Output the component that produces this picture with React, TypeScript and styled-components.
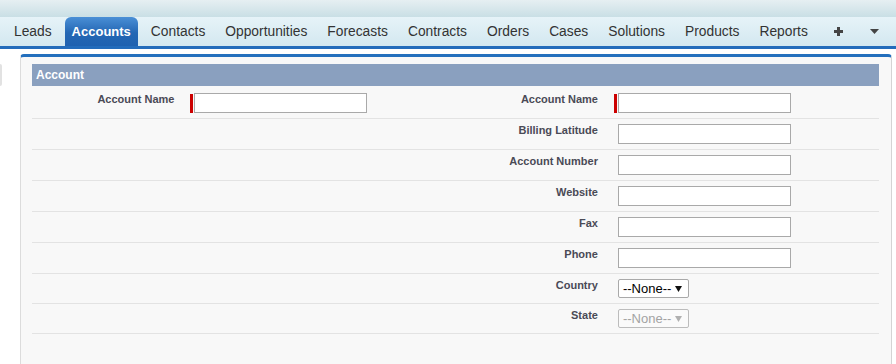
import React from 'react';
import styled, { createGlobalStyle } from 'styled-components';

const tabs = ['Leads', 'Accounts', 'Contacts', 'Opportunities', 'Forecasts', 'Contracts', 'Orders', 'Cases', 'Solutions', 'Products', 'Reports'];

type Field = { label: string; kind?: 'input' | 'select'; required?: boolean; disabled?: boolean };

const rows: { left?: Field; right?: Field }[] = [
  { left: { label: 'Account Name', required: true }, right: { label: 'Account Name', required: true } },
  { right: { label: 'Billing Latitude' } },
  { right: { label: 'Account Number' } },
  { right: { label: 'Website' } },
  { right: { label: 'Fax' } },
  { right: { label: 'Phone' } },
  { right: { label: 'Country', kind: 'select' } },
  { right: { label: 'State', kind: 'select', disabled: true } },
];

const GlobalStyle = createGlobalStyle`
  html, body {
    margin: 0;
    padding: 0;
    background: #fff;
    overflow: hidden;
  }
  body {
    font-family: "Liberation Sans", Arial, sans-serif;
  }
  * { box-sizing: border-box; }
`;

const TopBand = styled.div`
  height: 17px;
  background: linear-gradient(#e6eff2, #c9dfe5);
`;

const TabBar = styled.nav`
  height: 32px;
  display: flex;
  align-items: flex-end;
  gap: 6px;
  padding-left: 7px;
  background: linear-gradient(#e6f3f8, #d3e8f0);
  border-bottom: 3px solid #236cbb;
`;

const Tab = styled.div<{ $active?: boolean }>`
  height: 29px;
  line-height: 29px;
  padding: 0 7px;
  font-size: ${(p) => (p.$active ? '13px' : '13.8px')};
  font-weight: ${(p) => (p.$active ? 'bold' : 'normal')};
  color: ${(p) => (p.$active ? '#fff' : '#333')};
  background: ${(p) => (p.$active ? 'linear-gradient(#4a8fd6, #2467b4 55%, #1f62b0)' : 'transparent')};
  border-radius: 6px 6px 0 0;
  white-space: nowrap;
`;

const IconTab = styled.div<{ $ml: number }>`
  height: 29px;
  display: flex;
  align-items: center;
  margin-left: ${(p) => p.$ml}px;
  color: #444;
`;

const Body = styled.div`
  display: flex;
  align-items: flex-start;
  padding-top: 5px;
`;

const Handle = styled.div`
  width: 2px;
  height: 22px;
  margin-top: 10px;
  background: #e2e2e2;
  border-radius: 0 3px 3px 0;
`;

const Panel = styled.section`
  flex: 1;
  margin: 0 4px 0 18px;
  padding: 7px 12px 30px 11px;
  background: #f8f8f8;
  border-top: 3px solid #236fbd;
  border-left: 1px solid #dcdcdc;
  border-right: 1px solid #d4d4d4;
  border-radius: 4px 4px 0 0;
`;

const SectionHeader = styled.h3`
  margin: 0;
  height: 22px;
  line-height: 22px;
  padding-left: 4px;
  background: #8aa0bf;
  color: #fff;
  font-size: 12px;
  font-weight: bold;
`;

const Rows = styled.div``;

const Row = styled.div`
  display: grid;
  grid-template-columns: 18% 32% 18% 32%;
  border-bottom: 1px solid #e3e3e3;
  &:first-child {
    padding-top: 2px;
  }
`;

const LabelCell = styled.div`
  padding: 5px 10px 0 2px;
  text-align: right;
  font-size: 11px;
  line-height: 13px;
  font-weight: bold;
  color: #4a4a56;
`;

const DataCell = styled.div`
  display: flex;
  align-items: center;
  padding: 5px 0 5px 10px;
`;

const RequiredBar = styled.span`
  width: 3px;
  height: 19px;
  margin: 0 1px 0 -4px;
  background: #c00;
`;

const TextInput = styled.input`
  width: 173px;
  height: 20px;
  padding: 0 2px;
  border: 1px solid #a9a9a9;
  border-radius: 0;
  background: #fff;
  font: 13px "Liberation Sans", Arial, sans-serif;
`;

const SelectBox = styled.div<{ $disabled?: boolean }>`
  width: 71px;
  height: 19px;
  display: flex;
  align-items: center;
  justify-content: space-between;
  padding: 0 6px 0 4px;
  border: 1px solid ${(p) => (p.$disabled ? '#bcbcbc' : '#a9a9a9')};
  border-radius: 2px;
  background: ${(p) => (p.$disabled ? '#fafafa' : '#fff')};
  color: ${(p) => (p.$disabled ? '#a3a3a3' : '#000')};
  font-size: 13px;
  line-height: 17px;
`;

const Caret = ({ color, w, h }: { color: string; w: number; h: number }) => (
  <svg width={w} height={h} viewBox={`0 0 ${w} ${h}`}>
    <polygon points={`0,0 ${w},0 ${w / 2},${h}`} fill={color} />
  </svg>
);

const Plus = () => (
  <svg width="9" height="9" viewBox="0 0 9 9">
    <rect x="3" y="0" width="3" height="9" fill="#444" />
    <rect x="0" y="3" width="9" height="3" fill="#444" />
  </svg>
);

const FieldCells = ({ field }: { field?: Field }) => {
  if (!field) {
    return (
      <>
        <LabelCell />
        <DataCell />
      </>
    );
  }
  return (
    <>
      <LabelCell>{field.label}</LabelCell>
      <DataCell>
        {field.required && <RequiredBar />}
        {field.kind === 'select' ? (
          <SelectBox $disabled={field.disabled}>
            <span>--None--</span>
            <Caret color={field.disabled ? '#b0b0b0' : '#111'} w={7} h={6} />
          </SelectBox>
        ) : (
          <TextInput type="text" />
        )}
      </DataCell>
    </>
  );
};

const App: React.FC = () => (
  <>
    <GlobalStyle />
    <TopBand />
    <TabBar>
      {tabs.map((t) => (
        <Tab key={t} $active={t === 'Accounts'}>
          {t}
        </Tab>
      ))}
      <IconTab $ml={13}>
        <Plus />
      </IconTab>
      <IconTab $ml={21}>
        <Caret color="#444" w={9} h={5} />
      </IconTab>
    </TabBar>
    <Body>
      <Handle />
      <Panel>
        <SectionHeader>Account</SectionHeader>
        <Rows>
          {rows.map((r, i) => (
            <Row key={i}>
              <FieldCells field={r.left} />
              <FieldCells field={r.right} />
            </Row>
          ))}
        </Rows>
      </Panel>
    </Body>
  </>
);

export default App;
